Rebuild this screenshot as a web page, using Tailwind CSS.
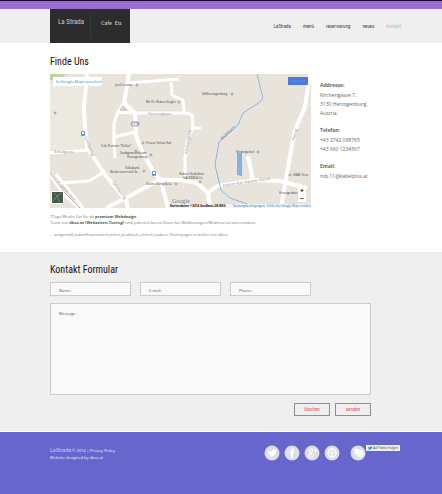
<!DOCTYPE html>
<html lang="de">
<head>
    <meta charset="UTF-8">
    <meta name="viewport" content="width=device-width, initial-scale=1.0">
    <title>La Strada - Kontakt</title>
    <script src="https://cdn.jsdelivr.net/npm/@tailwindcss/browser@4"></script>
</head>
<body class="min-h-screen flex flex-col bg-white font-['Open_Sans',sans-serif] text-[5px] leading-[9px] text-[#666]">
    <div class="h-[9px] border-t border-[#10002f] bg-[#9a6fd0]"></div>

    <header class="flex justify-between bg-[#efefef] pl-[50px] pr-[41px]">
        <a href="#" class="flex w-20 h-[34px] bg-[#2c2c2c] text-[#ccc] py-[5px] font-['Roboto_Condensed','Open_Sans_Condensed',Roboto,sans-serif]">
            <span class="w-[41px] pl-2 pt-1 border-r border-[#3a3a3a] text-[7px] whitespace-nowrap">La Strada</span>
            <span class="pl-[10px] pt-1 text-[6px] whitespace-nowrap">Cafe &nbsp;Eis</span>
        </a>
        <nav class="flex items-center gap-3 text-[5px] text-[#444] font-['Roboto_Condensed','Open_Sans_Condensed',Roboto,sans-serif]">
            <a href="#">LaStrada</a>
            <a href="#">menü</a>
            <a href="#">reservierung</a>
            <a href="#">neues</a>
            <a href="#" class="text-[#a5cfa0]">kontakt</a>
        </nav>
    </header>

    <main>
        <section class="pl-[50px] pr-[41px] pt-3 pb-[14px]">
            <h2 class="text-[10px] leading-[14px] text-[#1c0d14] font-['Roboto_Condensed','Open_Sans_Condensed',Roboto,sans-serif]">Finde Uns</h2>
            <div class="grid grid-cols-[261fr_81fr] gap-[9px] mt-[5px]">
                <div>
                    <!-- map -->
                    <svg viewBox="0 0 261 134" class="block w-full" font-family="Open Sans, sans-serif" font-size="3" fill="#333">
                        <rect width="261" height="134" fill="#e8e4dc"/>
                        <path d="M0 10H32L33 50L36 75L0 78Z" fill="#ece9e0"/>
                        <path d="M0 0H16L10 6H0Z" fill="#bfd3a2"/>
                        <g fill="none" stroke="#fff" stroke-width="3" stroke-linejoin="round">
                            <path d="M37 0L34 33L35 53L37 72L39 77L56 102L76 126L78 134" stroke-width="4"/>
                            <path d="M0 79L39 76M9 109L39 107L54 98"/>
                            <path d="M0 101L13 119L28 134M6 100L20 118L33 134"/>
                            <path d="M79 0L74 29L85 39L86 62L93 79L103 97L111 107L118 134" stroke-width="4"/>
                            <path d="M74 29L68 38L64 49V68L65 84M64 63L86 58M68 38L85 39"/>
                            <path d="M79 9L129 5M121 8L122 21L133 26L134 39"/>
                            <path d="M85 39L136 39L142 41L143 53L137 68L135 84V99M143 54H151"/>
                            <path d="M56 134L76 124L109 106L130 106L147 109L158 119L160 134" stroke-width="4"/>
                            <path d="M158 119L167 112L205 106L230 107L257 114M198 82L203 106" stroke-width="4"/>
                            <path d="M260 0L255 33L245 56L240 82L231 134" stroke-width="4"/>
                            <path d="M135 99V106"/>
                        </g>
                        <path d="M0 99L15 119L30 134" fill="none" stroke="#bbb" stroke-width="1"/>
                        <path d="M207 0L213 24L210 28L193 39L188 51L169 68L165 91L171 116L180 124L197 130" fill="none" stroke="#8fb3e3" stroke-width="1"/>
                        <path d="M187 79H192V102L187 101Z" fill="#86aeea"/>
                        <g fill="#fff" stroke="#999" stroke-width="1">
                            <circle cx="87" cy="11" r="1"/><circle cx="129" cy="28" r="1"/><circle cx="182" cy="20" r="1"/>
                            <circle cx="86" cy="77" r="1"/><circle cx="93" cy="69" r="1"/><circle cx="101" cy="81" r="1"/>
                            <circle cx="94" cy="97" r="1"/><circle cx="126" cy="110" r="1"/><circle cx="150" cy="108" r="1"/>
                            <circle cx="208" cy="78" r="1"/><circle cx="240" cy="101" r="1"/><circle cx="5" cy="39" r="1"/>
                            <rect x="81" y="48" width="8" height="4" rx="2"/>
                        </g>
                        <text x="82" y="51">L110</text>
                        <g fill="#5aa0de">
                            <rect x="31" y="57" width="4" height="5" rx="1"/>
                            <rect x="102" y="97" width="4" height="5" rx="1"/>
                        </g>
                        <path d="M32 58H34V60H32ZM103 98H105V100H103Z" fill="#fff"/>
                        <path d="M73 32L76 36H70Z" fill="#ddd" stroke="#bbb"/>
                        <text x="65" y="12">Josef Leisner</text>
                        <text x="96" y="29">Mt. Dr. Robert Ziegler</text>
                        <text x="98" y="41" font-size="4" fill="#888">Herrengasse</text>
                        <text x="152" y="21">Stiftherzogenburg</text>
                        <text x="51" y="73">Cafe Pension "Dollen"</text>
                        <text x="96" y="70">Friseur Schau Hair</text>
                        <text x="70" y="80">Stadtgemeindeamt</text>
                        <text x="77" y="84">Herzogenburg</text>
                        <text x="75" y="95">Volksbank</text>
                        <text x="60" y="99">Niederösterreich St...</text>
                        <text x="96" y="111">Elektro König &amp; Co</text>
                        <text x="129" y="101">Hubert Heidelmer</text>
                        <text x="133" y="105">GALDEM &amp; Co</text>
                        <text x="186" y="79">Kindergarten</text>
                        <text x="243" y="102">UBBC Herz</text>
                        <text x="229" y="120">Herzogenburg</text>
                        <g fill="#888" font-size="4">
                            <text x="4" y="79">Schulgasse</text>
                            <text transform="translate(34 63) rotate(68)">Schillerring</text>
                            <text transform="translate(62 109) rotate(53)">Schillerring</text>
                            <text transform="translate(8 108) rotate(49)" font-size="3">St. Andräer Gasse</text>
                            <text transform="translate(137 80) rotate(-80)">Kirchengasse</text>
                            <text transform="translate(173 113) rotate(-9)">Doktor Karl Renner Gasse</text>
                            <text transform="translate(244 67) rotate(-72)">Auring</text>
                        </g>
                        <text transform="translate(172 66) rotate(-43)" font-size="4" fill="#4c79a8">Mühlbach</text>
                        <rect x="3" y="3" width="49" height="9" fill="#fff"/>
                        <text x="6" y="9" font-size="4" fill="#1088c8">In Google Maps ansehen</text>
                        <rect x="238" y="3" width="20" height="8" fill="#5278e0"/>
                        <text x="241" y="8" fill="#3aa0f5">Anmelden</text>
                        <rect x="1" y="117" width="13" height="13" fill="#fff"/>
                        <rect x="2" y="118" width="11" height="11" fill="#47584d"/>
                        <path d="M3 127L7 122L12 119M5 119L10 128" stroke="#74857a" fill="none"/>
                        <text x="122" y="129" font-family="Liberation Serif, serif" font-size="6" fill="#777">Google</text>
                        <rect x="248" y="112" width="8" height="16" fill="#fff"/>
                        <path d="M250.500 116.500H253.500M252 115V118M250.500 124.500H253.500" stroke="#444" fill="none"/>
                        <rect x="118" y="130" width="143" height="4" fill="#f5f5f5"/>
                        <text x="120" y="133" font-weight="bold" fill="#111">Kartendaten ©2014 GeoBasis-DE/BKG</text>
                        <text x="183" y="133" fill="#1779b5">Nutzungsbedingungen</text>
                        <text x="217" y="133" fill="#1779b5">Fehler bei Google Maps melden</text>
                    </svg>
                </div>
                <address class="not-italic pt-[7px] space-y-2 whitespace-nowrap">
                    <div><b class="block mb-px">Addresse:</b>Kirchengasse 7,<br>3130 Herzogenburg,<br>Austria.</div>
                    <div><b class="block mb-px">Telefon:</b>+43 2742 098765<br>+43 660 1234567</div>
                    <div><b class="block mb-px">Email:</b><a href="mailto:rob.11@kabelplus.at">rob.11@kabelplus.at</a></div>
                </address>
            </div>
            <div class="mt-[6px] text-[4px] leading-[6px] text-[#777]">
                <p>7Tage/Woche für Sie da <b class="text-[#555]">premium Webdesign</b>.<br>
                Team von <b class="text-[#555]">dkos.at [Webseiten-Tuning]</b> sind jederzeit bereit Ihnen bei Weblösungen/Webhost zu unterstützen.</p>
                <p class="mt-[6px]">... zeitgemäß,zukunftsorientiert,sicher,praktisch,schnell,saubere Homepages erstellen von dkos.</p>
            </div>
        </section>

        <section class="bg-[#efefef] border-b border-white pl-[50px] pr-[71px] pt-[11px] pb-[15px]">
            <h2 class="text-[10px] leading-[14px] text-[#1c0d14] font-['Roboto_Condensed','Open_Sans_Condensed',Roboto,sans-serif]">Kontakt Formular</h2>
            <form class="mt-[5px]">
                <div class="grid grid-cols-3 gap-[9px] pr-[60px]">
                    <input type="text" aria-label="Name" placeholder="Name:" class="min-w-0 h-[14px] px-2 pt-[2px] border border-[#ccc] bg-[#f9f9f9] text-[4px] placeholder:text-[#555]">
                    <input type="email" aria-label="E-mail" placeholder="E-mail:" class="min-w-0 h-[14px] px-2 pt-[2px] border border-[#ccc] bg-[#f9f9f9] text-[4px] placeholder:text-[#555]">
                    <input type="tel" aria-label="Phone" placeholder="Phone:" class="min-w-0 h-[14px] px-2 pt-[2px] border border-[#ccc] bg-[#f9f9f9] text-[4px] placeholder:text-[#555]">
                </div>
                <textarea aria-label="Message" placeholder="Message:" class="block w-full h-[92px] mt-[7px] px-2 py-[5px] border border-[#ccc] bg-[#f9f9f9] text-[4px] resize-none placeholder:text-[#555]"></textarea>
                <div class="flex justify-end gap-[5px] mt-2 text-[5px] text-[#e0525f] font-['Roboto_Condensed','Open_Sans_Condensed',Roboto,sans-serif]">
                    <button type="reset" class="w-9 h-[13px] border border-[#8e8e8e]">löschen</button>
                    <button type="submit" class="w-9 h-[13px] border border-[#8e8e8e]">senden</button>
                </div>
            </form>
        </section>
    </main>

    <footer class="grow flex justify-between items-start bg-[#6666cc] pl-[50px] pr-[42px] pt-[13px] text-[4px] leading-[7px] text-[#f0f0ff]">
        <p class="pt-px"><a href="#" class="text-[6px] font-['Roboto_Condensed','Open_Sans_Condensed',Roboto,sans-serif] text-[#c4c4f0]">LaStrada</a> © 2014 | <a href="#">Privacy Policy</a><br>Website designed by <a href="#">dkos.at</a></p>
        <div class="flex items-start">
            <div class="flex gap-1">
                <a href="#" aria-label="Twitter">
                    <svg viewBox="0 0 16 16" class="size-4"><circle cx="8" cy="8" r="7.5" fill="#dedee6"/><path d="M4 5C5 6 6.500 7 8 7C7.800 4.500 10 4 11 5L12.500 4.600L12 6C12 10 8 13 4 11C5 11 6 10.800 6.500 10C5 10 4.700 9 4.500 8.500H5C4 8 4 7 4 5Z" fill="#fff"/></svg>
                </a>
                <a href="#" aria-label="Facebook">
                    <svg viewBox="0 0 16 16" class="size-4"><circle cx="8" cy="8" r="7.500" fill="#dedee6"/><path d="M7 13V8.500H5.500V6.500H7V5.500C7 4 8 3.300 10 3.500V5.200C9 5.200 9 5.500 9 6.500H10.500L10 8.500H9V13Z" fill="#fff"/></svg>
                </a>
                <a href="#" aria-label="Google Plus">
                    <svg viewBox="0 0 16 16" class="size-4"><circle cx="8" cy="8" r="7.500" fill="#dedee6"/><g fill="none" stroke="#fff" stroke-width="1"><circle cx="6.800" cy="6" r="1.800"/><path d="M6.500 4H9.500M7 8L8 9"/><ellipse cx="6.800" cy="10.800" rx="2.500" ry="1.600"/><path d="M10 5.500H13M11.500 4V7"/></g></svg>
                </a>
                <a href="#" aria-label="Pinterest">
                    <svg viewBox="0 0 16 16" class="size-4"><circle cx="8" cy="8" r="7.500" fill="#dedee6"/><circle cx="8" cy="8" r="4" fill="none" stroke="#fff" stroke-width="1.500"/><path d="M7 12L8 7M6.500 8C6 6 9.500 5.500 9.500 7.500C9.500 9 8.500 9.500 7.700 9" fill="none" stroke="#fff"/></svg>
                </a>
            </div>
            <a href="#" aria-label="Blog" class="ml-[10px]">
                <svg viewBox="0 0 16 16" class="size-4"><circle cx="8" cy="8" r="7.500" fill="#dedee6"/><path d="M4 4H8L9 5H13V8L14 9V12H8V10L5 9Z" fill="#fff"/></svg>
            </a>
            <a href="#" class="flex items-center w-[34px] h-[6px] px-[2px] gap-px bg-[#eee] text-[#333] text-[3px] whitespace-nowrap">
                <svg viewBox="0 0 16 16" class="size-1 shrink-0"><path d="M0 2C3 5 5 6 8 6C8 1 12 1 14 3L16 2V5C15 14 7 17 0 13C3 13 4 12 5 11C2 11 1 9 1 8Z" fill="#1b95e0"/></svg>
                Auf Twitter folgen
            </a>
        </div>
    </footer>
</body>
</html>
